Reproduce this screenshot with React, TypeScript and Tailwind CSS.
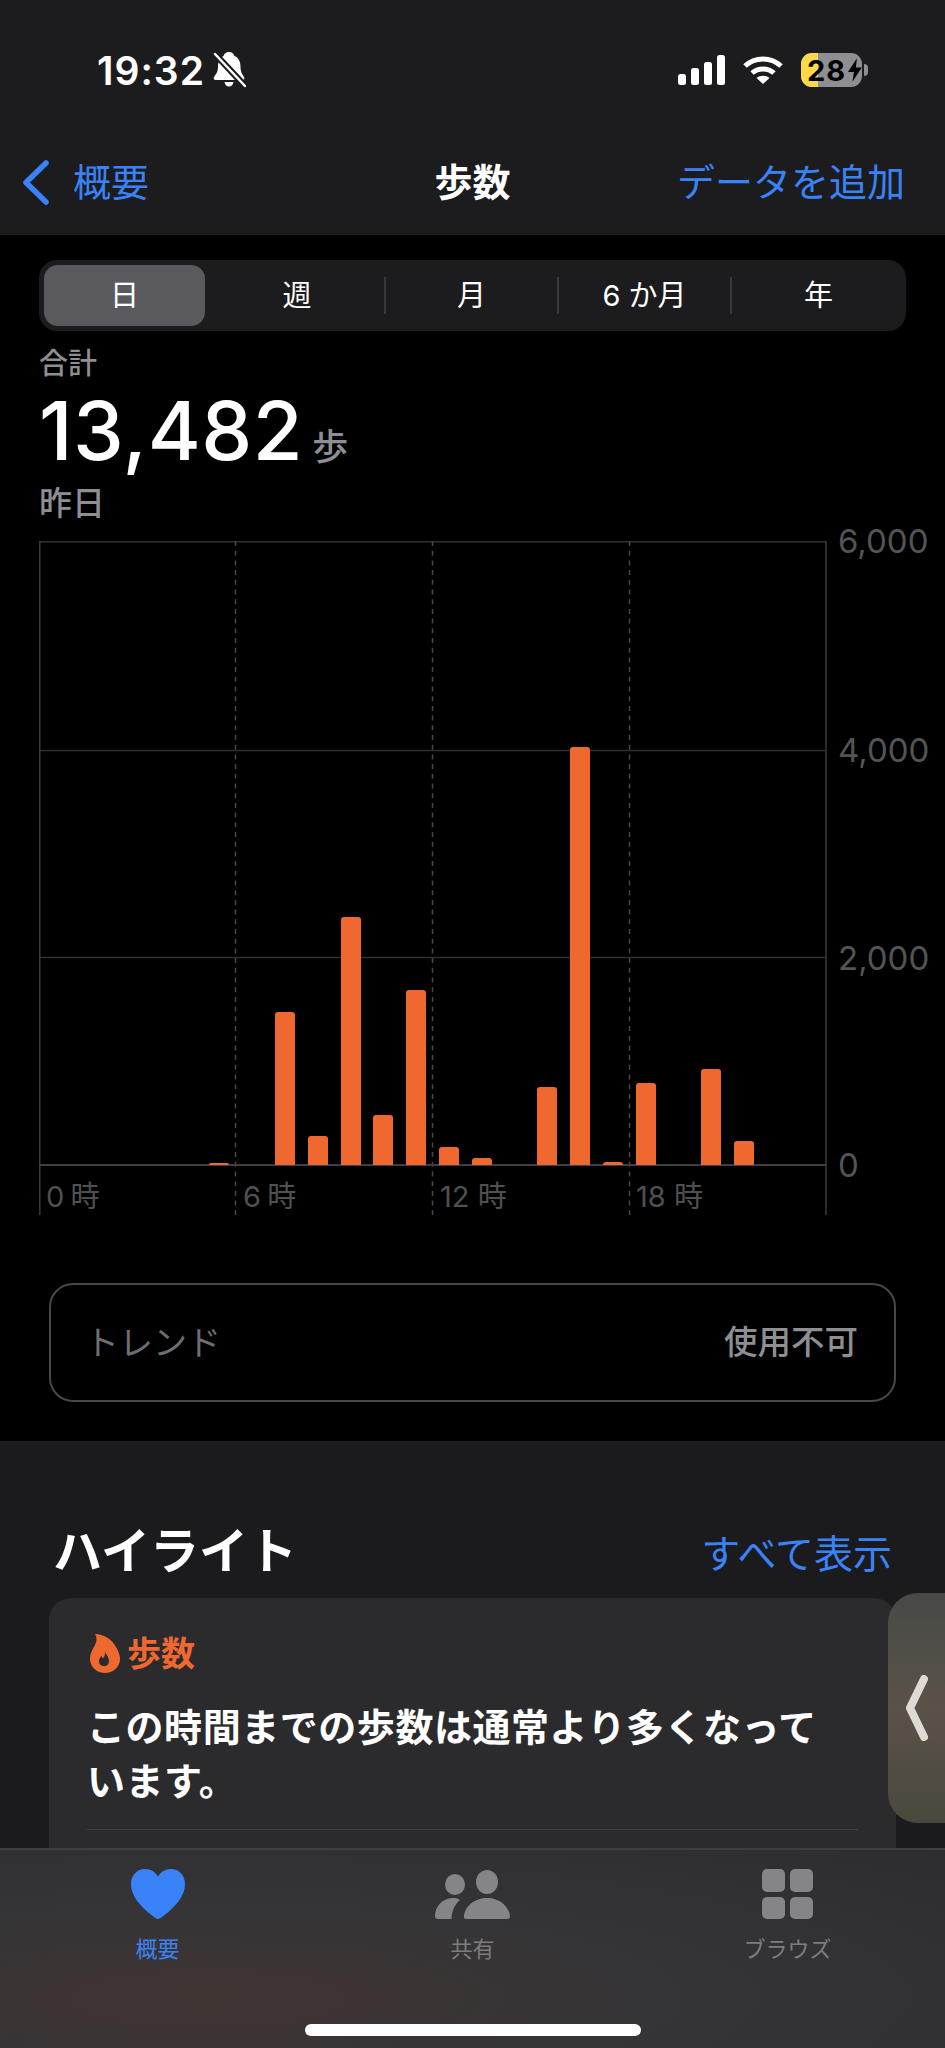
import React from 'react'

const BLUE = 'text-[#3a82f7]'

// bar top positions read off the screenshot, as height above the baseline
const bars: Record<number, number> = {
  5: 2, 7: 153, 8: 29, 9: 248, 10: 50, 11: 175, 12: 18, 13: 7, 15: 78, 16: 418, 17: 3, 18: 82, 20: 96, 21: 24,
}
const hours = Array.from({ length: 24 }, (_, i) => i)

function BellSlash() {
  return (
    <svg width="33" height="36" viewBox="0 0 33 36">
      <path fill="#fff" d="M16 0C19 0 21 2 21.5 4C26 6 27.5 10 27.5 15C27.5 21 30 23 31 25C32 27 31 28 29 28H3C1 28 0 27 1 25C2 23 5 21 5 15C5 10 7 6 10.5 4C11 2 13 0 16 0Z" />
      <path fill="#fff" d="M11.5 30H20.5C20 33 18 34.5 16 34.5C14 34.5 12 33 11.5 30Z" />
      <path stroke="#1c1c1e" strokeWidth="6.5" d="M2 2L32 34" />
      <path stroke="#fff" strokeWidth="2.5" strokeLinecap="round" d="M2 2L32 34" />
    </svg>
  )
}

function Signal() {
  return (
    <svg width="47" height="30" viewBox="0 0 47 30" fill="#fff">
      <rect x="0" y="19" width="8" height="11" rx="2.5" />
      <rect x="13" y="13" width="8" height="17" rx="2.5" />
      <rect x="26" y="7" width="8" height="23" rx="2.5" />
      <rect x="39" y="0" width="8" height="30" rx="2.5" />
    </svg>
  )
}

function Wifi() {
  return (
    <svg width="40" height="28" viewBox="0 0 40 28" fill="none">
      <path stroke="#fff" strokeWidth="5" d="M2 10C12 .5 28 .5 38 10" />
      <path stroke="#fff" strokeWidth="5" d="M9 17C15 11.5 25 11.5 31 17" />
      <path fill="#fff" d="M13.5 22C17 19 23 19 26.5 22L20 28Z" />
    </svg>
  )
}

function Battery() {
  return (
    <div className="flex items-center gap-[2px]">
      <div className="relative flex h-[34px] w-[61px] items-center overflow-hidden rounded-[11px] bg-[#8e8e93] pl-[6px]">
        <div className="absolute inset-y-0 left-0 w-[17px] bg-[#fcd94b]" />
        <span className="relative text-[29px] leading-none font-bold tracking-[1px] text-black">28</span>
        <svg className="relative ml-[2px]" width="14" height="24" viewBox="0 0 14 24" fill="#000">
          <path d="M9 0L0 14H6L4.5 24L14 9.5H8Z" />
        </svg>
      </div>
      <div className="h-[12px] w-[4px] rounded-r-full bg-[#8e8e93]" />
    </div>
  )
}

function Flame() {
  return (
    <svg width="30" height="39" viewBox="0 0 30 39">
      <path fill="#ef6830" fillRule="evenodd" d="M5 0C13 0 22 5 26 13C29 18 30 22 30 25C30 33 23 39 15 39C7 39 0 33 0 25C0 19 3 15 5 11C7 7 7 3 5 0ZM15 17C15.5 20 19 23 19 27C19 30 17 32 14 32C11 32 9 30 9 27C9 24.5 10.5 23 11.5 22C12 23.5 12.5 24 13.5 24C14.5 22 15.5 20 15 17Z" />
    </svg>
  )
}

function Heart() {
  return (
    <svg width="54" height="50" viewBox="0 0 54 50" fill="#3a82f7">
      <path d="M27 50C25.5 50 24 48.8 21 46.5C9 37 0 27 0 15C0 6 6.5 0 14 0C20 0 24.5 3 27 7.5C29.5 3 34 0 40 0C47.5 0 54 6 54 15C54 27 45 37 33 46.5C30 48.8 28.5 50 27 50Z" />
    </svg>
  )
}

function People() {
  return (
    <svg width="75" height="49" viewBox="0 0 75 49" fill="#858587">
      <ellipse cx="20" cy="14.5" rx="10" ry="10.5" />
      <ellipse cx="52" cy="12" rx="11" ry="12" />
      <path d="M0 46C0 36 8 28 18 28C21 28 23 28.5 25 30C20 34 17 40 16.5 49H3C1 49 0 48 0 46Z" />
      <path d="M31 49C29.5 49 28.5 48 29 46C30 36 40 28 52 28C64 28 74 36 75 46C75 48 74 49 72 49Z" />
    </svg>
  )
}

function Browse() {
  return (
    <svg width="51" height="50" viewBox="0 0 51 50" fill="#858587">
      <rect x="0" y="0" width="23" height="23" rx="5" />
      <rect x="28" y="0" width="23" height="23" rx="5" />
      <rect x="0" y="28" width="23" height="22" rx="5" />
      <rect x="28" y="28" width="23" height="22" rx="5" />
    </svg>
  )
}

function Chart() {
  return (
    <div className="relative ml-[39px] h-[674px] w-[788px]">
      <svg className="absolute inset-0" width="788" height="674" viewBox="0 0 788 674" fill="none">
        <path stroke="#2f2f31" strokeWidth="1.5" d="M0 .75H787M0 209.5H787M0 416.5H787" />
        <path stroke="#3a3a3c" strokeWidth="1.5" d="M.75 0V674M787 0V674" />
        <path stroke="#48484a" strokeWidth="1.5" strokeDasharray="5 4.7" d="M196.5 0V674M393.5 0V674M590.5 0V674" />
        <path stroke="#3f3f41" strokeWidth="2" d="M0 624H787" />
      </svg>
      <div className="absolute top-0 left-0 flex h-[624px] w-[787px] items-end">
        {hours.map((h) => (
          <div key={h} className="flex flex-1 justify-center">
            {bars[h] ? (
              <div className="w-[20px] rounded-t-[3px] bg-[#ef6830]" style={{ height: bars[h] }} />
            ) : null}
          </div>
        ))}
      </div>
      <span className="absolute top-[-20px] left-[799px] text-[33px] leading-[40px] text-[#545456]">6,000</span>
      <span className="absolute top-[189px] left-[799px] text-[33px] leading-[40px] text-[#545456]">4,000</span>
      <span className="absolute top-[397px] left-[799px] text-[33px] leading-[40px] text-[#545456]">2,000</span>
      <span className="absolute top-[604px] left-[799px] text-[33px] leading-[40px] text-[#545456]">0</span>
      <span className="absolute top-[636px] left-[7px] text-[29px] leading-[40px] [word-spacing:-2px] text-[#505052]">0 時</span>
      <span className="absolute top-[636px] left-[204px] text-[29px] leading-[40px] [word-spacing:-2px] text-[#505052]">6 時</span>
      <span className="absolute top-[636px] left-[401px] text-[29px] leading-[40px] text-[#505052]">12 時</span>
      <span className="absolute top-[636px] left-[597px] text-[29px] leading-[40px] text-[#505052]">18 時</span>
    </div>
  )
}

function Segments() {
  return (
    <div className="mx-[39px] flex h-[71px] items-center rounded-[18px] bg-[#1c1c1e] p-[5px] text-[29px] text-white">
      <div className="flex h-full w-[161px] items-center justify-center rounded-[14px] bg-[#5a5a5e]">日</div>
      <div className="flex flex-1 justify-center pl-[5px]">週</div>
      <div className="h-[37px] w-[2px] bg-[#3a3a3c]" />
      <div className="flex w-[171px] justify-center">月</div>
      <div className="h-[37px] w-[2px] bg-[#3a3a3c]" />
      <div className="flex w-[171px] justify-center">6 か月</div>
      <div className="h-[37px] w-[2px] bg-[#3a3a3c]" />
      <div className="flex w-[169px] justify-center pl-[4px]">年</div>
    </div>
  )
}

function TabItem({ icon, label, active }: { icon: React.ReactNode; label: string; active?: boolean }) {
  return (
    <div className="flex flex-1 flex-col items-center">
      <div className="flex h-[50px] items-center">{icon}</div>
      <div className={`mt-[14px] text-[22px] leading-[32px] ${active ? BLUE : 'text-[#7d7d7f]'}`}>{label}</div>
    </div>
  )
}

export default function App() {
  return (
    <div className="relative flex h-[2048px] w-[945px] flex-col overflow-hidden bg-[#1b1b1d] font-['Inter','Noto_Sans_CJK_JP',sans-serif]">
      <header className="h-[235px] shrink-0 bg-[#1c1c1e]">
        <div className="flex h-[34px] translate-y-[53px] items-center justify-between pr-[77px] pl-[97px]">
          <div className="flex items-center gap-[8px]">
            <span className="text-[39px] leading-none font-semibold tracking-[1px] text-white">19:32</span>
            <BellSlash />
          </div>
          <div className="flex items-center">
            <Signal />
            <div className="mr-[18px] ml-[18px]">
              <Wifi />
            </div>
            <Battery />
          </div>
        </div>
        <div className="grid translate-y-[120px] grid-cols-[1fr_auto_1fr] items-center px-[23px]">
          <div className={`flex items-center gap-[24px] text-[38px] ${BLUE}`}>
            <svg width="26" height="45" viewBox="0 0 26 45" fill="none" stroke="#3a82f7" strokeWidth="5.5" strokeLinecap="round" strokeLinejoin="round">
              <path d="M23 3L3 22.5L23 42" />
            </svg>
            <span>概要</span>
          </div>
          <div className="text-[38px] font-semibold text-white">歩数</div>
          <div className={`pr-[17px] text-right text-[38px] ${BLUE}`}>データを追加</div>
        </div>
      </header>

      <section className="h-[1206px] shrink-0 bg-black pt-[25px]">
        <Segments />
        <div className="px-[39px]">
          <div className="mt-[15px] text-[29px] leading-[36px] font-medium text-[#8e8e93]">合計</div>
          <div className="mt-[9px] flex h-[80px] items-baseline gap-[9px]">
            <span className="text-[81px] leading-[80px] font-medium tracking-[.5px] text-white">13,482</span>
            <span className="text-[36px] font-medium text-[#8e8e93]">歩</span>
          </div>
          <div className="mt-[12px] text-[33px] leading-[40px] font-medium text-[#8e8e93]">昨日</div>
        </div>
        <div className="mt-[18px]">
          <Chart />
        </div>
        <div className="mx-[49px] mt-[68px] flex h-[119px] items-center justify-between rounded-[24px] border-2 border-[#48484a] pr-[36px] pl-[34px]">
          <span className="text-[34px] text-[#6e6e72]">トレンド</span>
          <span className="text-[33.5px] font-medium text-[#8e8e93]">使用不可</span>
        </div>
      </section>

      <section className="flex-1 overflow-hidden">
        <div className="mt-[75px] flex items-center justify-between pr-[53px] pl-[53px]">
          <h2 className="text-[49px] leading-[72px] font-bold text-white">ハイライト</h2>
          <span className="translate-y-[2px] text-[39px] text-[#3a82f7]">すべて表示</span>
        </div>
        <div className="mx-[49px] mt-[10px] h-[300px] rounded-t-[22px] bg-[#2b2b2d] pt-[30px] pr-[70px] pl-[38px]">
          <div className="flex items-center gap-[7px] pl-[3px]">
            <Flame />
            <span className="text-[34px] font-semibold text-[#ef6830]">歩数</span>
          </div>
          <p className="mt-[21px] text-[38px] leading-[54px] font-semibold tracking-[.55px] text-white">この時間までの歩数は通常より多くなっています。</p>
          <div className="mt-[21px] -mr-[32px] h-px bg-[#414143]" />
        </div>
      </section>

      <nav className="h-[200px] shrink-0 border-t-2 border-[#3f3f41] bg-[radial-gradient(ellipse_at_22%_75%,#403432_0%,#353436_42%,#2d2d2f_100%)]">
        <div className="flex pt-[19px]">
          <TabItem icon={<Heart />} label="概要" active />
          <TabItem icon={<People />} label="共有" />
          <TabItem icon={<Browse />} label="ブラウズ" />
        </div>
        <div className="mx-auto mt-[59px] h-[12px] w-[336px] rounded-full bg-white" />
      </nav>

      {/* back-swipe handle floating over the card */}
      <div className="absolute top-[1593px] right-0 flex h-[230px] w-[57px] items-center rounded-l-[30px] bg-[linear-gradient(180deg,#484a46_0%,#5a5248_50%,#4a483e_100%)] pl-[17px]">
        <svg width="24" height="66" viewBox="0 0 24 66" fill="none" stroke="#dedbd5" strokeWidth="8" strokeLinecap="round" strokeLinejoin="round">
          <path d="M19 4L5 33L19 62" />
        </svg>
      </div>
    </div>
  )
}
